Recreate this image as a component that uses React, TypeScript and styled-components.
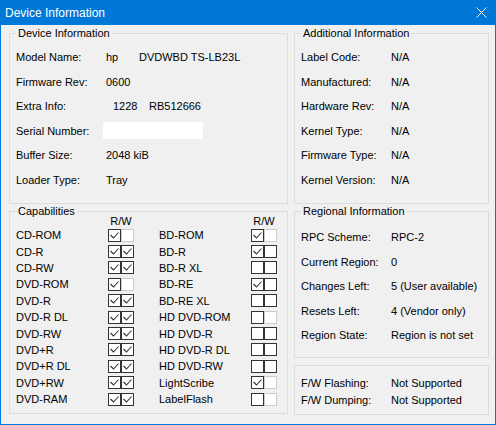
import styled, { createGlobalStyle } from "styled-components";

type Box = "c" | "u" | "d";

interface CapRow {
  name: string;
  r: Box;
  w: Box;
}

const leftCaps: CapRow[] = [
  { name: "CD-ROM", r: "c", w: "d" },
  { name: "CD-R", r: "c", w: "c" },
  { name: "CD-RW", r: "c", w: "c" },
  { name: "DVD-ROM", r: "c", w: "d" },
  { name: "DVD-R", r: "c", w: "c" },
  { name: "DVD-R DL", r: "c", w: "c" },
  { name: "DVD-RW", r: "c", w: "c" },
  { name: "DVD+R", r: "c", w: "c" },
  { name: "DVD+R DL", r: "c", w: "c" },
  { name: "DVD+RW", r: "c", w: "c" },
  { name: "DVD-RAM", r: "c", w: "c" },
];

const rightCaps: CapRow[] = [
  { name: "BD-ROM", r: "c", w: "d" },
  { name: "BD-R", r: "c", w: "u" },
  { name: "BD-R XL", r: "u", w: "u" },
  { name: "BD-RE", r: "c", w: "u" },
  { name: "BD-RE XL", r: "u", w: "u" },
  { name: "HD DVD-ROM", r: "u", w: "d" },
  { name: "HD DVD-R", r: "u", w: "u" },
  { name: "HD DVD-R DL", r: "u", w: "u" },
  { name: "HD DVD-RW", r: "u", w: "u" },
  { name: "LightScribe", r: "c", w: "d" },
  { name: "LabelFlash", r: "u", w: "d" },
];

const additional = [
  ["Label Code:", "N/A"],
  ["Manufactured:", "N/A"],
  ["Hardware Rev:", "N/A"],
  ["Kernel Type:", "N/A"],
  ["Firmware Type:", "N/A"],
  ["Kernel Version:", "N/A"],
];

const regional = [
  ["RPC Scheme:", "RPC-2"],
  ["Current Region:", "0"],
  ["Changes Left:", "5 (User available)"],
  ["Resets Left:", "4 (Vendor only)"],
  ["Region State:", "Region is not set"],
];

function CheckBox({ state }: { state: Box }) {
  return (
    <S.Check $disabled={state === "d"}>
      {state === "c" && (
        <svg width="11" height="11" viewBox="0 0 11 11">
          <polyline
            points="1.5,5 4.5,8 9.5,2.5"
            fill="none"
            stroke="#333"
            strokeWidth="1.1"
          />
        </svg>
      )}
    </S.Check>
  );
}

function CapColumn({ rows }: { rows: CapRow[] }) {
  return (
    <S.CapCol>
      <S.CapHeader>
        <span />
        <S.RW>R/W</S.RW>
      </S.CapHeader>
      {rows.map((row) => (
        <S.CapItem key={row.name}>
          <span>{row.name}</span>
          <S.Pair>
            <CheckBox state={row.r} />
            <CheckBox state={row.w} />
          </S.Pair>
        </S.CapItem>
      ))}
    </S.CapCol>
  );
}

export default function App() {
  return (
    <>
      <GlobalStyle />
      <S.Window>
        <S.TitleBar>
          <S.Title>Device Information</S.Title>
          <S.Close>
            <svg width="11" height="11" viewBox="0 0 11 11">
              <path d="M0.5 0.5 L10.5 10.5 M10.5 0.5 L0.5 10.5" stroke="#fff" strokeWidth="1" />
            </svg>
          </S.Close>
        </S.TitleBar>

        <S.Body>
          <S.Column>
            <S.Group $height={171} $pad="11px 6px 0">
              <S.Legend>Device Information</S.Legend>
              <S.Row>
                <span>Model Name:</span>
                <span>
                  <S.Part $width={33}>hp</S.Part>DVDWBD TS-LB23L
                </span>
              </S.Row>
              <S.Row>
                <span>Firmware Rev:</span>
                <span>0600</span>
              </S.Row>
              <S.Row>
                <span>Extra Info:</span>
                <S.Indented>
                  <S.Part $width={36}>1228</S.Part>RB512666
                </S.Indented>
              </S.Row>
              <S.Row>
                <span>Serial Number:</span>
                <S.TextBox />
              </S.Row>
              <S.Row>
                <span>Buffer Size:</span>
                <span>2048 kiB</span>
              </S.Row>
              <S.Row>
                <span>Loader Type:</span>
                <span>Tray</span>
              </S.Row>
            </S.Group>

            <S.Group $height={203} $pad="3px 6px 0">
              <S.Legend>Capabilities</S.Legend>
              <S.Caps>
                <CapColumn rows={leftCaps} />
                <CapColumn rows={rightCaps} />
              </S.Caps>
            </S.Group>
          </S.Column>

          <S.Column>
            <S.Group $height={171} $pad="11px 6px 0">
              <S.Legend>Additional Information</S.Legend>
              {additional.map(([label, value]) => (
                <S.Row key={label}>
                  <span>{label}</span>
                  <span>{value}</span>
                </S.Row>
              ))}
            </S.Group>

            <S.Group $height={147} $pad="13px 6px 0">
              <S.Legend>Regional Information</S.Legend>
              {regional.map(([label, value]) => (
                <S.Row key={label}>
                  <span>{label}</span>
                  <span>{value}</span>
                </S.Row>
              ))}
            </S.Group>

            <S.Group $height={50} $pad="8px 6px 0">
              <S.FlashRow>
                <span>F/W Flashing:</span>
                <span>Not Supported</span>
              </S.FlashRow>
              <S.FlashRow>
                <span>F/W Dumping:</span>
                <span>Not Supported</span>
              </S.FlashRow>
            </S.Group>
          </S.Column>
        </S.Body>
      </S.Window>
    </>
  );
}

const GlobalStyle = createGlobalStyle`
  html, body {
    margin: 0;
    padding: 0;
    background: #f0f0f0;
  }
  body {
    font-family: "Liberation Sans", Arial, sans-serif;
    font-size: 11px;
    color: #000;
  }
`;

const S = {
  Window: styled.div`
    box-sizing: border-box;
    width: 496px;
    height: 425px;
    border: 1px solid #0078d7;
    background: #f0f0f0;
    display: flex;
    flex-direction: column;
  `,

  TitleBar: styled.div`
    height: 24px;
    flex: none;
    background: #0078d7;
    color: #fff;
    display: flex;
    align-items: center;
    justify-content: space-between;
    padding: 0 8px 0 4px;
  `,

  Title: styled.span`
    font-size: 12px;
    line-height: 14px;
  `,

  Close: styled.span`
    display: flex;
    width: 11px;
    height: 11px;
    margin-top: -1px;
  `,

  Body: styled.div`
    display: flex;
    gap: 6px;
    padding: 8px 6px 0 8px;
    & > :first-child {
      width: 279px;
    }
    & > :last-child {
      width: 195px;
    }
  `,

  Column: styled.div`
    display: flex;
    flex-direction: column;
    gap: 7px;
  `,

  Group: styled.div<{ $height: number; $pad: string }>`
    position: relative;
    box-sizing: border-box;
    height: ${(p) => p.$height}px;
    border: 1px solid #dcdcdc;
    padding: ${(p) => p.$pad};
  `,

  Legend: styled.span`
    position: absolute;
    top: -7px;
    left: 6px;
    padding: 0 2px;
    line-height: 13px;
    background: #f0f0f0;
  `,

  Row: styled.div`
    display: grid;
    grid-template-columns: 90px 1fr;
    align-items: center;
    height: 24.5px;
    white-space: nowrap;
  `,

  FlashRow: styled.div`
    display: grid;
    grid-template-columns: 90px 1fr;
    align-items: center;
    height: 17px;
    white-space: nowrap;
  `,

  Part: styled.span<{ $width: number }>`
    display: inline-block;
    width: ${(p) => p.$width}px;
  `,

  Indented: styled.span`
    padding-left: 7px;
  `,

  TextBox: styled.div`
    width: 100px;
    height: 17px;
    margin-left: -3px;
    background: #fff;
  `,

  Caps: styled.div`
    display: flex;
    gap: 25px;
  `,

  CapCol: styled.div`
    display: flex;
    flex-direction: column;
  `,

  CapHeader: styled.div`
    display: grid;
    grid-template-columns: 92px 26px;
    height: 12px;
    line-height: 12px;
  `,

  RW: styled.span`
    text-align: center;
  `,

  CapItem: styled.div`
    display: grid;
    grid-template-columns: 92px 26px;
    align-items: center;
    height: 16.4px;
    white-space: nowrap;
  `,

  Pair: styled.div`
    display: flex;
  `,

  Check: styled.div<{ $disabled: boolean }>`
    box-sizing: border-box;
    width: 13px;
    height: 13px;
    border: 1px solid ${(p) => (p.$disabled ? "#cccccc" : "#333333")};
    background: #fff;
    display: flex;
    svg {
      display: block;
    }
  `,
};
